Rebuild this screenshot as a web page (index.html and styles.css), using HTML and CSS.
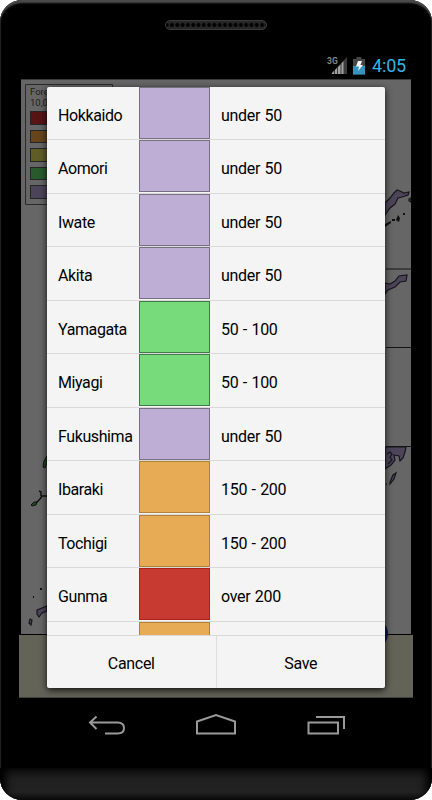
FILE: index.html
```
<!DOCTYPE html>
<html lang="en">
  <head>
  <meta charset="utf-8">
  <title>Forest map</title>
  <link rel="stylesheet" href="styles.css">
  </head>
  <body>

<div class="phone">

  <div class="speaker"></div>

  <div class="statusbar">
    <svg class="signal" width="22" height="20" viewBox="0 0 22 20">
      <text x="0" y="8" class="net">3G</text>
      <path d="M20 1V18H4Z" fill="#3b3b3b"/>
      <path d="M5 18v-1l2-2v3zM8 18v-4l2-2v6zM11 18v-7l2.500-2.500V18zM14.500 18V7.500L16.500 5V18z" fill="#a2a2a2"/>
    </svg>
    <svg class="battery" width="12" height="18" viewBox="0 0 12 18">
      <path d="M3.500 0h5v2H12v15.500H0V2h3.500z" fill="#454545"/>
      <path d="M0 9h12v8.500H0z" fill="#3594bd"/>
      <path d="M5 4h4L7.500 8H10L5 14l1-4.500H3z" fill="#f5f5f5"/>
    </svg>
    <span class="clock">4:05</span>
  </div>

  <div class="screen">
    <div class="map">
      <svg class="islands" width="390" height="555" viewBox="0 0 390 555">
        <g fill="none" stroke="#141414" stroke-width="1.200">
          <path d="M365 190H390M365 268.500H390M365 367.500H390"/>
          <path d="M4.500 5.500H91.500V125.500H4.500z" stroke="#2a2a2a" stroke-width="1"/>
        </g>
        <g fill="#4c455a" stroke="#17151b" stroke-width="1.200">
          <path d="M364 124l5-5 4-5 3-3 3 1 4 2 5-1-1 3-6 2-4 1-3 6-5 4-5 7z"/>
          <path d="M364 204l5 1 5-3 4-5 8-1-1 6-6 1-5 5-7 3-3 4z"/>
          <path d="M364 368h21l-1 5-2 6-3 3-1-5-5-1 1 5-4 5-6 4z"/>
          <path d="M366 375l3-2 2 2-2 3 2 3-4 4" fill="none"/>
          <path d="M369 403l3-7 3-2-2 6-4 5zM388 120l2-1v4l-2-1z"/>
          <path d="M16 531l10-4v5l-5 2-3 4-2-3zM9 540l2 1-1 5-2-2z"/>
        </g>
        <g fill="#101010">
          <path d="M364 145l6-3v2l-6 4zM371 140h3v2h-3zM375 141l2-5 2 3-1 4zM382 134h2v2h-2zM365 405l1 2v-3zM19 509h2v2h-2zM12 517h1v2h-1z"/>
        </g>
        <path d="M26 377l-3 5-1 6 2 1 2-5z" fill="#1f4825" stroke="#111"/>
        <path d="M10 426l3-3 3 0-1 3-4 1z" fill="#204826" stroke="#111"/>
        <path d="M15 424l4-4 2-3 5 0M18 412l2 1 0 4" fill="none" stroke="#111" stroke-width="1.500"/>
      </svg>
      <div class="legend">
        <div class="legend-title">Forest<br>10,000</div>
        <div class="key dark-red"></div>
        <div class="key dark-orange"></div>
        <div class="key dark-yellow"></div>
        <div class="key dark-green"></div>
        <div class="key dark-purple"></div>
      </div>
    </div>
    <div class="footer"></div>
    <div class="knob"></div>

    <div class="dialog">
      <div class="list">
        <div class="row"><div class="name">Hokkaido</div><div class="color purple"></div><div class="value">under 50</div></div>
        <div class="row"><div class="name">Aomori</div><div class="color purple"></div><div class="value">under 50</div></div>
        <div class="row"><div class="name">Iwate</div><div class="color purple"></div><div class="value">under 50</div></div>
        <div class="row"><div class="name">Akita</div><div class="color purple"></div><div class="value">under 50</div></div>
        <div class="row"><div class="name">Yamagata</div><div class="color green"></div><div class="value">50 - 100</div></div>
        <div class="row"><div class="name">Miyagi</div><div class="color green"></div><div class="value">50 - 100</div></div>
        <div class="row"><div class="name">Fukushima</div><div class="color purple"></div><div class="value">under 50</div></div>
        <div class="row"><div class="name">Ibaraki</div><div class="color orange"></div><div class="value">150 - 200</div></div>
        <div class="row"><div class="name">Tochigi</div><div class="color orange"></div><div class="value">150 - 200</div></div>
        <div class="row"><div class="name">Gunma</div><div class="color red"></div><div class="value">over 200</div></div>
        <div class="row"><div class="name"></div><div class="color orange"></div><div class="value"></div></div>
      </div>
      <div class="buttons">
        <div class="button">Cancel</div>
        <div class="button">Save</div>
      </div>
    </div>
  </div>

  <div class="navbar">
    <svg width="38" height="22" viewBox="0 0 38 22">
      <path d="M9.500 3.500L3 9.500L9.500 16M3 9.500H30.500Q37 9.500 37 15T30.500 20.500H18" />
    </svg>
    <svg width="42" height="22" viewBox="0 0 42 22">
      <path d="M2 20.500V8.500L21 2L40 8.500V20.500z" />
    </svg>
    <svg width="38" height="22" viewBox="0 0 38 22">
      <path d="M1.500 9.500H31V20.500H1.500zM9 4H37V16" />
    </svg>
  </div>

  <div class="chin"></div>

</div>

  </body>
</html>
```

FILE: styles.css
```
body {margin:0; background-color:#fff; font: 16px Roboto, "Liberation Sans", sans-serif; color:#000;}
.phone {display:flex; flex-direction:column; box-sizing:border-box; width:432px; height:800px; overflow:hidden; background-color:#000; border-radius:22px; box-shadow: inset 0 4px 2px -1px #4c4c4c, inset 1px 0 1px #222, inset -1px 0 1px #222;}

.speaker {box-sizing:border-box; width:102px; height:10px; margin:20px auto 0; border:1px solid #3c3c3c; border-radius:5px; background: radial-gradient(circle at 3px 3px, #000 1.5px, #262626 2.3px) 3px 1px / 5.3px 6px; }

.statusbar {display:flex; align-items:center; height:26px; margin-top:23px; padding-right:26px; justify-content:flex-end; box-sizing:border-box;}
.signal {margin-right:4px;}
.battery {margin-right:7px;}
.net {font: bold 8.5px Roboto, sans-serif; fill:#858585;}
.clock {font-size:18px; line-height:24px; letter-spacing:-0.200px; color:#33b5e5;}

.screen {position:relative; height:619px; margin:0 19px;}
.map {position:relative; height:555px; margin:0 2px; background-color:#666; box-shadow: inset 0 1px 0 #3c3c3c;}
.islands {display:block;}
.legend {position:absolute; left:9px; top:7px; width:80px; color:#202020;}
.legend-title {font-size:9.500px; line-height:11px; margin-bottom:3px;}
.key {width:40px; height:11.500px; margin-bottom:5.100px; border:1px solid #262626;}
.dark-red {background-color:#581315;}
.dark-orange {background-color:#66451d;}
.dark-yellow {background-color:#5f5d25;}
.dark-green {background-color:#285a2d;}
.dark-purple {background-color:#4c455a;}
.footer {box-sizing:border-box; height:63px; margin-top:1px; background-color:#636358; border-bottom:1px solid #40403c;}
.knob {position:absolute; left:340px; top:540px; width:29px; height:29px; border-radius:50%; background-color:#0d1748;}

.dialog {position:absolute; left:28px; top:8px; width:338px; height:601px; border-radius:2px; background-color:#f4f4f4; box-shadow:0 2px 7px rgba(0,0,0,0.85); overflow:hidden;}
.list {height:548px; overflow:hidden;}
.row {display:flex; box-sizing:border-box; height:53.560px; border-bottom:1px solid #d9d9d9;}
.row:first-child {height:53px;}
.name {width:92px; padding-left:11px; box-sizing:border-box; letter-spacing:-0.400px;}
.value {padding-left:11px; letter-spacing:-0.300px; word-spacing:0.800px;}
.name, .value {line-height:58px;}
.color {box-sizing:border-box; width:71px; border:1px solid #777; height:52px;}
.purple {background-color:#beaed6; border-color:#777080;}
.green {background-color:#78db7b; border-color:#42794a;}
.orange {background-color:#e7aa55; border-color:#b18235;}
.red {background-color:#c73a31; border-color:#ae2018;}
.buttons {display:flex; box-sizing:border-box; height:53px; border-top:1px solid #d9d9d9;}
.button {flex:1; text-align:center; line-height:55px; letter-spacing:-0.300px;}
.button + .button {border-left:1px solid #dedede;}

.navbar {display:flex; justify-content:space-between; height:22px; margin:15px 87px 0;}
.navbar path {fill:none; stroke:#999; stroke-width:2;}

.chin {height:32px; margin-top:auto; background: linear-gradient(#0e0e0e, #202020 35%, #222 75%, #101010); box-shadow: inset 9px 0 9px -3px #000, inset -9px 0 9px -3px #000;}
```
